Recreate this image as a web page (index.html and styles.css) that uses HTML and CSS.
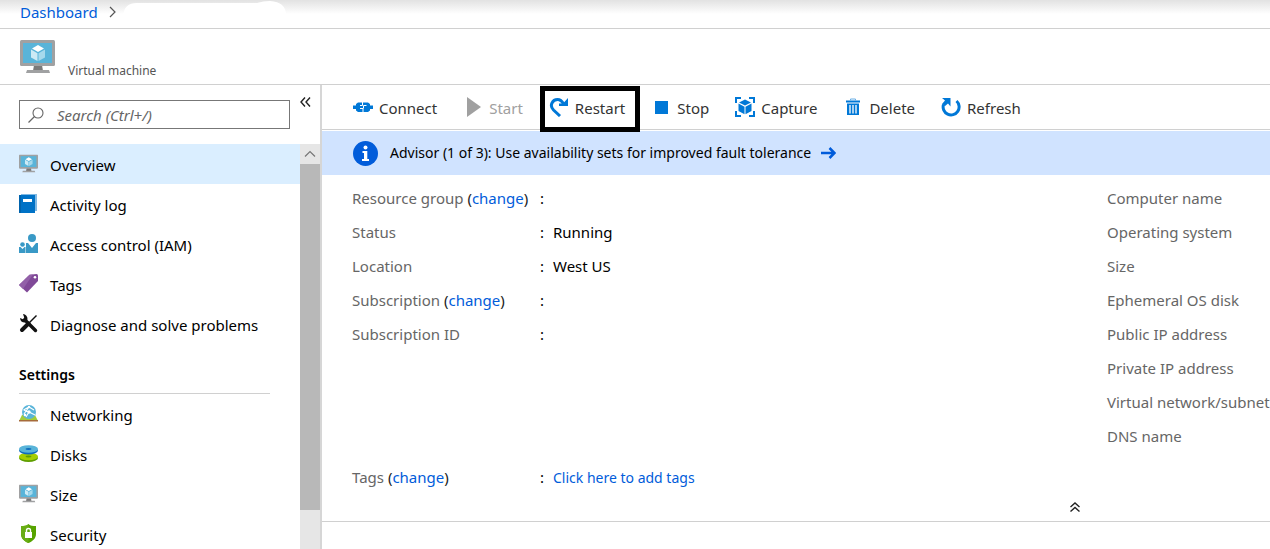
FILE: index.html
```html
<!DOCTYPE html>
<html lang="en">
<head>
<meta charset="utf-8">
<title>Virtual machine</title>
<link rel="stylesheet" href="styles.css">
</head>
<body>
<svg class="sprite" aria-hidden="true">
  <symbol id="vm" viewBox="0 0 35 33">
    <path d="M14 25h8l1 6h-10z" fill="#7a7a7a"/>
    <path d="M7 30h22l1 3H6z" fill="#a0a1a2"/>
    <rect width="35" height="26" rx="1.500" fill="#a0a1a2"/>
    <rect x="3" y="3" width="29" height="20" fill="#59b4d9"/>
    <path d="M18 5l6 3.500-6 3.500-6-3.500z" fill="#fff"/>
    <path d="M11 9.500l6.500 3.800V21L11 17.500z" fill="#cdeaf5"/>
    <path d="M25 9.500l-6.500 3.800V21l6.500-3.500z" fill="#a6d9ec"/>
  </symbol>
</svg>
<div class="page">
  <nav class="breadcrumb" aria-label="Breadcrumb">
    <a href="#">Dashboard</a>
    <svg class="crumb-arrow" viewBox="0 0 7 12"><path d="M1 1l5 5-5 5" fill="none" stroke="#555" stroke-width="1.200"/></svg>
    <svg class="crumb-blank" viewBox="0 0 163 26" preserveAspectRatio="none"><path d="M0 15Q1 2 14 2H134Q140 0 147 0Q163 1 163 14V26H0z" fill="#fff"/></svg>
  </nav>
  <header class="header">
    <svg class="header-icon"><use href="#vm"/></svg>
    <p class="subtitle">Virtual machine</p>
  </header>
  <div class="body">
    <aside class="sidebar">
      <div class="search-row">
        <label class="search">
          <svg viewBox="0 0 16 16" width="16" height="16"><circle cx="10" cy="6" r="5" fill="none" stroke="#666" stroke-width="1.100"/><path d="M6.500 9.500L.5 15.500" stroke="#666" stroke-width="1.200"/></svg>
          <input type="search" placeholder="Search (Ctrl+/)" aria-label="Search">
        </label>
        <button class="collapse" aria-label="Collapse menu"><svg viewBox="0 0 11 10" width="11" height="10"><path d="M5 .5L1 5l4 4.500M10 .5L6 5l4 4.500" fill="none" stroke="#222" stroke-width="1.400"/></svg></button>
      </div>
      <div class="menu-area">
        <nav class="menu" aria-label="Resource menu">
          <a class="item selected" href="#"><svg viewBox="0 0 35 33"><use href="#vm"/></svg>Overview</a>
          <a class="item" href="#"><svg viewBox="0 0 19 19"><path d="M2 0h16v17H2z" fill="#7fb9e4"/><path d="M0 1h16v18H0z" fill="#0072c6"/><path d="M0 1h2v18H0z" fill="#0063ad"/><path d="M4 5h9v3H4z" fill="#fff"/></svg>Activity log</a>
          <a class="item" href="#"><svg viewBox="0 0 19 19"><g fill="#3999c6"><circle cx="13" cy="4" r="4"/><path d="M7 9h2l4 5 4-5h2v10H7z"/><circle cx="3.500" cy="10.500" r="2.300"/><path d="M0 13h1.500l2 2 2-2H6.500v6H0z"/></g></svg>Access control (IAM)</a>
          <a class="item" href="#"><svg viewBox="0 0 19 19"><path d="M0 11L10.500.8 17.500 0Q19 0 19 1.500V7L8 18.500z" fill="#804998"/><path d="M0 11L10.500.8 14 .4 4 15z" fill="#9260a8"/><circle cx="16" cy="3.300" r="1.300" fill="#fff"/></svg>Tags</a>
          <a class="item" href="#"><svg viewBox="0 0 19 19"><path d="M17.500 1.500L10 9" stroke="#111" stroke-width="1.500"/><path d="M9.500 9.500L3 16" stroke="#111" stroke-width="4" stroke-linecap="round"/><path d="M6 6l10.500 10.500" stroke="#111" stroke-width="3.400" stroke-linecap="round"/><path d="M4 0a5 5 0 014.500 5.500L6 8.500A5 5 0 011 4l3 1.200L5.200 3.500z" fill="#111"/></svg>Diagnose and solve problems</a>
          <h2 class="section">Settings</h2>
          <a class="item" href="#"><svg viewBox="0 0 19 19"><path d="M3 11h13l3 6H0z" fill="#a2cc3a"/><path d="M0 16h19v1.500H0z" fill="#a66b3b"/><circle cx="10" cy="8" r="7" fill="#59b4d9"/><path d="M4.500 6L10 3l5 3M5 10l5-7M7 13l3-5 6 3M10 8L4.500 6" fill="none" stroke="#fff" stroke-width="1.100"/><circle cx="10" cy="8" r="1.700" fill="#fff"/><circle cx="10" cy="3" r="1.200" fill="#fff"/><circle cx="6" cy="11" r="1.300" fill="#fff"/></svg>Networking</a>
          <a class="item" href="#"><svg viewBox="0 0 19 19"><ellipse cx="9.500" cy="14" rx="9.500" ry="4" fill="#5e9e00"/><ellipse cx="9.500" cy="12.500" rx="9.500" ry="3.800" fill="#a5ce00"/><ellipse cx="9.500" cy="12.500" rx="3" ry="1" fill="#5e9e00"/><ellipse cx="9.500" cy="6.500" rx="9.500" ry="4" fill="#0f6cbd"/><ellipse cx="9.500" cy="5" rx="9.500" ry="3.800" fill="#59b4d9"/><ellipse cx="9.500" cy="5" rx="3" ry="1" fill="#0f6cbd"/></svg>Disks</a>
          <a class="item" href="#"><svg viewBox="0 0 35 33"><use href="#vm"/></svg>Size</a>
          <a class="item" href="#"><svg viewBox="0 0 19 19"><path d="M9.500 0C11.500 2 14 2 17 2v8c0 5-4 7.500-7.500 9C6 17.500 2 15 2 10V2c3 0 5.500 0 7.500-2z" fill="#57a300"/><path d="M9.500 0v19C6 17.500 2 15 2 10V2c3 0 5.500 0 7.500-2z" fill="#69ad15"/><path d="M6 8h7v6H6z" fill="#fff"/><path d="M7.500 8V6.500a2 2 0 014 0V8" fill="none" stroke="#fff" stroke-width="1.400"/></svg>Security</a>
        </nav>
        <div class="scrollbar" aria-hidden="true">
          <svg viewBox="0 0 20 20"><path d="M5 12.500l5-5 5 5" fill="none" stroke="#777" stroke-width="1.200"/></svg>
          <div class="thumb"></div>
        </div>
      </div>
    </aside>
    <main class="main">
      <div class="blade">
        <div class="toolbar">
          <button><svg viewBox="0 0 20 20"><path d="M0 8.500h3V7l2-1.500h10L17 7v1.500h3v3.500h-3v1.500L15 15H5l-2-1.500V12H0z" fill="#0078d7"/><path d="M9.500 5v3.500H7M7 11.500h3V15.500M10.500 8.500h3M10.500 8.500v3" fill="none" stroke="#fff" stroke-width="1"/></svg>Connect</button>
          <button disabled><svg viewBox="0 0 20 20"><path d="M4 0l14 10L4 20z" fill="#a0a0a0"/></svg>Start</button>
          <button class="marked"><svg viewBox="0 0 20 20"><path d="M11 19L4.500 13C0 8.500 3.500 2.500 8.500 2.500c3 0 4.500 1.500 6 4.500" fill="none" stroke="#0078d7" stroke-width="3"/><path d="M19 1v8H10V6.500h4z" fill="#0078d7"/></svg>Restart</button>
          <button><svg viewBox="0 0 20 20"><path d="M4 4h13v13H4z" fill="#0078d7"/></svg>Stop</button>
          <button><svg viewBox="0 0 20 20"><path d="M1 6V1h5M14 1h5v5M19 14v5h-5M6 19H1v-5" fill="none" stroke="#0078d7" stroke-width="2"/><path d="M10 2.500l6 3-6 3-6-3zM3.500 6.500l6 3.200v7.500l-6-3.200zM16.500 6.500l-6 3.200v7.500l6-3.200z" fill="#0078d7"/></svg>Capture</button>
          <button><svg viewBox="0 0 20 20"><path d="M3 3.500h14v2H3zM4 6.500h12V18H4z" fill="#0078d7"/><path d="M7.500 3.500V2h5v1.500" fill="none" stroke="#68aee5" stroke-width="1"/><path d="M7 8v8.500M10 8v8.500M13 8v8.500" stroke="#fff" stroke-width="1.300"/></svg>Delete</button>
          <button><svg viewBox="0 0 20 20"><path d="M15.500 4A8 8 0 112.500 7.500" fill="none" stroke="#0078d7" stroke-width="3"/><path d="M1 1h8.500v8.500L7 6.500 4 9 1 7l3-3.500z" fill="#0078d7"/></svg>Refresh</button>
        </div>
        <a class="advisor" href="#">
          <svg class="info" viewBox="0 0 25 25"><circle cx="12.500" cy="12.500" r="12.500" fill="#015cda"/><circle cx="12.500" cy="6.500" r="2" fill="#fff"/><path d="M9.500 10h4.800v8h1.700v2h-7v-2h2v-6H9.500z" fill="#fff"/></svg>
          <span>Advisor (1 of 3): Use availability sets for improved fault tolerance</span>
          <svg class="go" viewBox="0 0 15 12"><path d="M0 6h14M8.500 1l5 5-5 5" fill="none" stroke="#015cda" stroke-width="2.500"/></svg>
        </a>
        <section class="essentials">
          <dl>
            <div class="row"><dt>Resource group <span>(<a href="#">change</a>)</span></dt><dd></dd></div>
            <div class="row"><dt>Status</dt><dd>Running</dd></div>
            <div class="row"><dt>Location</dt><dd>West US</dd></div>
            <div class="row"><dt>Subscription <span>(<a href="#">change</a>)</span></dt><dd></dd></div>
            <div class="row"><dt>Subscription ID</dt><dd></dd></div>
          </dl>
          <dl>
            <div class="row"><dt>Computer name</dt><dd></dd></div>
            <div class="row"><dt>Operating system</dt><dd></dd></div>
            <div class="row"><dt>Size</dt><dd></dd></div>
            <div class="row"><dt>Ephemeral OS disk</dt><dd></dd></div>
            <div class="row"><dt>Public IP address</dt><dd></dd></div>
            <div class="row"><dt>Private IP address</dt><dd></dd></div>
            <div class="row"><dt>Virtual network/subnet</dt><dd></dd></div>
            <div class="row"><dt>DNS name</dt><dd></dd></div>
          </dl>
        </section>
        <dl class="tags">
          <div class="row"><dt>Tags <span>(<a href="#">change</a>)</span></dt><dd><a class="add" href="#">Click here to add tags</a></dd></div>
        </dl>
        <button class="fold" aria-label="Collapse essentials"><svg viewBox="0 0 10 10" width="10" height="10"><path d="M.5 5L5 1l4.500 4M.5 9.500L5 5.500l4.500 4" fill="none" stroke="#222" stroke-width="1.400"/></svg></button>
      </div>
    </main>
  </div>
</div>
</body>
</html>
```
FILE: styles.css
```css
* { box-sizing: border-box; }
body {
  margin: 0;
  font: 15px/20px "Noto Sans", "Open Sans", sans-serif;
  color: #000;
  background: #fff;
}
a { color: #015cda; text-decoration: none; }
button { border: 0; padding: 0; background: none; font: inherit; color: #333; }
h2, p, dl, dd { margin: 0; }
svg { flex: none; display: block; }
.sprite { position: absolute; width: 0; height: 0; }

.page { display: flex; flex-direction: column; height: 100vh; overflow: hidden; }
.breadcrumb {
  display: flex;
  align-items: center;
  flex: none;
  height: 29px;
  padding: 0 20px 4px;
  border-bottom: 1px solid #d0d0d0;
  background: linear-gradient(#e2e2e2, #fff 14px);
}
.crumb-arrow { width: 7px; height: 12px; margin: 0 7px 0 11px; }
.crumb-blank { width: 163px; height: 26px; margin-top: 4px; }
.header {
  display: flex;
  flex: none;
  height: 56px;
  gap: 13px;
  padding: 11px 20px 0;
  border-bottom: 1px solid #d0d0d0;
}
.header-icon { width: 35px; height: 33px; }
.subtitle { padding-top: 21px; font-size: 12px; color: #555; }

.body { display: flex; flex: 1; min-height: 0; }
.sidebar {
  display: flex;
  flex-direction: column;
  flex: none;
  width: 322px;
  border-right: 2px solid #d6d6d6;
}
.search-row { display: flex; flex: none; height: 59px; padding: 15px 9px 0 19px; gap: 10px; }
.search {
  display: flex;
  align-items: center;
  flex: 1;
  height: 29px;
  gap: 13px;
  padding: 0 8px;
  border: 1px solid #777;
}
.search input {
  flex: 1;
  min-width: 0;
  padding: 0;
  border: 0;
  outline: 0;
  background: none;
  font: inherit;
}
.search input::placeholder { color: #666; font-style: italic; opacity: 1; }
.collapse { height: 10px; margin-top: -3px; line-height: 0; }

.menu-area { display: flex; flex: 1; min-height: 0; }
.menu { flex: 1; overflow: hidden; }
.item {
  display: flex;
  align-items: center;
  height: 40px;
  gap: 12px;
  padding: 2px 0 0 19px;
  color: #000;
}
.item svg { width: 19px; height: 19px; margin-bottom: 4px; }
.item.selected { background: #daeeff; }
.section {
  height: 50px;
  margin: 0 30px 0 19px;
  padding-top: 21px;
  border-bottom: 1px solid #d0d0d0;
  font-size: 14px;
  font-weight: 600;
}
.scrollbar { width: 20px; background: #e6e6e6; }
.scrollbar svg { width: 20px; height: 20px; }
.thumb { height: 90%; max-height: calc(100% - 59px); background: #b8b8b8; }

.main { flex: 1; min-width: 0; overflow: hidden; }
.blade { min-width: 1506px; border-bottom: 1px solid #d0d0d0; }
.toolbar {
  display: flex;
  align-items: center;
  gap: 26px;
  height: 45px;
  padding: 0 31px;
  border-bottom: 1px solid #d0d0d0;
}
.toolbar button { display: flex; align-items: center; gap: 6px; position: relative; padding-top: 2px; }
.toolbar svg { width: 20px; height: 20px; margin-bottom: 2px; }
.toolbar button:disabled { color: #a0a0a0; }
.marked::after {
  content: "";
  position: absolute;
  inset: -9px -15px -13px -9px;
  border: 5px solid #000;
}
.advisor {
  display: flex;
  align-items: center;
  height: 44px;
  margin-top: 1px;
  padding: 0 31px;
  background: #d0e3ff;
  color: #000;
  font-size: 14px;
}
.info { width: 25px; height: 25px; margin-right: 12px; }
.go { width: 15px; height: 12px; margin-left: 10px; }
.essentials {
  display: grid;
  grid-template-columns: 1fr 1fr;
  gap: 64px;
  padding: 6px 30px 0;
}
.row { display: flex; height: 34px; align-items: center; }
.row dt { width: 188px; color: #666; white-space: nowrap; }
.row dt span { color: #222; }
.row dd::before { content: ":"; display: inline-block; width: 13px; }
.essentials dl:last-child dd { padding-left: 40px; }
.tags { padding: 7px 30px 0; }
.add { font-size: 14px; }
.fold { display: block; margin: 8px auto 9px; height: 10px; line-height: 0; }
```
